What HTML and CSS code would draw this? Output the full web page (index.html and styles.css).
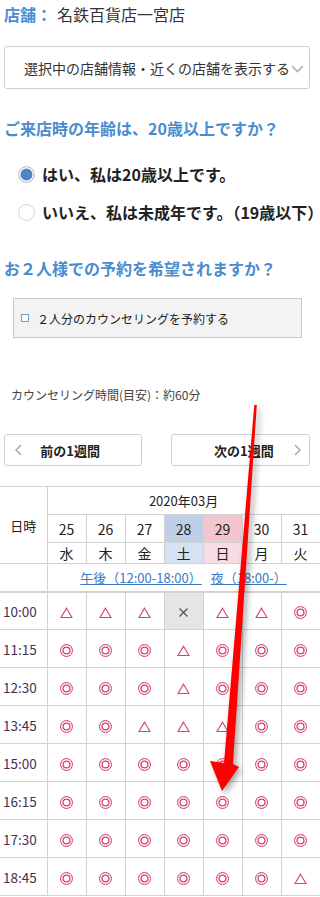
FILE: index.html
```html
<!DOCTYPE html>
<html lang="ja">
<head>
<meta charset="utf-8">
<title>予約</title>
<link rel="stylesheet" href="styles.css">
</head>
<body>
<div class="page">
  <p class="store"><span class="store-label">店舗：</span><span class="store-name">名鉄百貨店一宮店</span></p>
  <div class="select">
    <span>選択中の店舗情報・近くの店舗を表示する</span>
    <svg class="select-chev" width="13" height="8" viewBox="0 0 13 8"><polyline points="1,1 6.5,6.5 12,1" fill="none" stroke="#b0b0b0" stroke-width="1.6"/></svg>
  </div>

  <h2 class="question q1">ご来店時の年齢は、20歳以上ですか？</h2>
  <ul class="radios">
    <li class="radio-row"><span class="radio checked"></span><span class="radio-text">はい、私は20歳以上です。</span></li>
    <li class="radio-row"><span class="radio"></span><span class="radio-text">いいえ、私は未成年です。（19歳以下）</span></li>
  </ul>

  <h2 class="question q2">お２人様での予約を希望されますか？</h2>
  <label class="pair-box"><span class="check"></span><span class="pair-text">２人分のカウンセリングを予約する</span></label>

  <p class="duration">カウンセリング時間(目安)：約60分</p>

  <div class="week-nav">
    <div class="week-btn prev">
      <svg class="nav-chev" width="7" height="12" viewBox="0 0 7 12"><polyline points="6,1 1,6 6,11" fill="none" stroke="#aaa" stroke-width="1.5"/></svg>
      <span>前の1週間</span>
    </div>
    <div class="week-btn next">
      <span>次の1週間</span>
      <svg class="nav-chev" width="7" height="12" viewBox="0 0 7 12"><polyline points="1,1 6,6 1,11" fill="none" stroke="#aaa" stroke-width="1.5"/></svg>
    </div>
  </div>
</div>

<table class="cal">
  <colgroup><col class="c-time"><col><col><col><col><col><col><col></colgroup>
  <thead>
    <tr class="r-month"><th rowspan="3" class="hd-time">日時</th><th colspan="7" class="month">2020年03月</th></tr>
    <tr class="r-date"><th>25</th><th>26</th><th>27</th><th class="sat">28</th><th class="sun">29</th><th>30</th><th>31</th></tr>
    <tr class="r-day"><th>水</th><th>木</th><th>金</th><th class="sat-l">土</th><th class="sun-l">日</th><th>月</th><th>火</th></tr>
    <tr class="r-link"><th></th><th colspan="7"><a class="jump" href="#">午後（12:00-18:00）</a><a class="jump" href="#">夜（18:00-）</a></th></tr>
  </thead>
  <tbody id="slots"></tbody>
</table>

<svg class="arrow" width="320" height="897" viewBox="0 0 320 897">
  <polygon points="254.3,405 256.8,405 233,764 239,767 222,791 210,761 224,763" fill="#ff0000"/>
</svg>

<script>
  var data = [
    ["10:00","TTTXTTO"],
    ["11:15","OOOTOOO"],
    ["12:30","OOOTOOO"],
    ["13:45","OOTTTOO"],
    ["15:00","OOOOOOO"],
    ["16:15","OOOOOOO"],
    ["17:30","OOOOOOO"],
    ["18:45","OOOOOOT"]
  ];
  var tri = '<svg class="tri" width="13" height="11" viewBox="0 0 13 11"><path d="M6.5 1.2 L12 10.5 H1 Z" fill="none" stroke="#d7426c" stroke-width="1.1"/></svg>';
  var cross = '<svg class="cross" width="11" height="11" viewBox="0 0 11 11"><path d="M1.5 1.5 L9.5 9.5 M9.5 1.5 L1.5 9.5" stroke="#555" stroke-width="1.3"/></svg>';
  var html = "";
  data.forEach(function (row) {
    html += '<tr><th class="time">' + row[0] + '</th>';
    row[1].split("").forEach(function (c) {
      if (c === "O") html += '<td><span class="dbl"></span></td>';
      else if (c === "T") html += '<td>' + tri + '</td>';
      else html += '<td class="full">' + cross + '</td>';
    });
    html += '</tr>';
  });
  document.getElementById("slots").innerHTML = html;
</script>
</body>
</html>
```

FILE: styles.css
```css
* { box-sizing: border-box; }
html, body { margin: 0; padding: 0; background: #fff; }
body {
  font-family: "Noto Sans CJK JP", "Noto Sans", sans-serif;
  color: #333;
  width: 320px;
  overflow: hidden;
  position: relative;
}
.page { padding: 4px 10px 0 4px; }

.store { margin: 0; font-size: 16px; line-height: 20px; white-space: nowrap; }
.store-label { color: #4a8ccf; font-weight: bold; }
.store-name { margin-left: 5px; }

.select {
  margin-top: 22px;
  height: 43px;
  border: 1px solid #cfcfcf;
  border-radius: 3px;
  display: flex;
  align-items: center;
  padding-left: 19px;
  font-size: 14px;
  white-space: nowrap;
}
.select-chev { margin-left: 1px; margin-top: 2px; }

.question {
  margin: 0;
  color: #4a8ccf;
  font-size: 16px;
  font-weight: bold;
  line-height: 22px;
  white-space: nowrap;
}
.q1 { margin-top: 28px; }
.q2 { margin-top: 26px; }

.radios { list-style: none; margin: 16px 0 0; padding: 0 0 0 14px; }
.radio-row { height: 38px; display: flex; align-items: center; white-space: nowrap; }
.radio {
  width: 17px; height: 17px; border-radius: 50%;
  border: 1px solid #d4d4d4; background: #fff; flex: none;
}
.radio.checked { background: #4e84c4; box-shadow: inset 0 0 0 1.5px #fff; }
.radio-text { margin-left: 7px; font-size: 16px; font-weight: bold; color: #222; }

.pair-box {
  margin: 19px 0 0 9px;
  width: 289px; height: 40px;
  background: #f3f3f3;
  border: 1px solid #c8c8c8;
  display: flex; align-items: center;
  padding-left: 7px;
  font-size: 12px;
}
.check { width: 8px; height: 8px; border: 1px solid #6f9fd4; background: #fff; flex: none; }
.pair-text { margin-left: 8px; color: #222; }

.duration { margin: 48px 0 0 7px; font-size: 12px; line-height: 18px; color: #444; }

.week-nav { margin-top: 30px; display: flex; justify-content: space-between; }
.week-btn {
  height: 32px;
  border: 1px solid #cfcfcf;
  border-radius: 3px;
  display: flex; align-items: center; justify-content: space-between;
  font-size: 13px; font-weight: bold; color: #222;
}
.prev { width: 138px; padding: 0 41px 0 10px; }
.next { width: 139px; padding: 0 8px 0 42px; }

.cal {
  margin-top: 20px;
  width: 320px;
  table-layout: fixed;
  border-collapse: collapse;
  font-size: 13px;
}
.cal col { width: 39px; }
.cal col.c-time { width: 47px; }
.cal th, .cal td {
  border: 1px solid #d2d2d2;
  padding: 0;
  text-align: center;
  font-weight: normal;
  color: #222;
}
.cal tr > :first-child { border-left: none; }
.r-month { height: 28px; }
.r-date { height: 28px; }
.r-day { height: 20px; }
.r-link { height: 28px; }
.r-link th { border-bottom: 2px solid #d2d2d2; }
.hd-time { font-size: 13px; }
.month { font-size: 13px; }
.r-date th { font-size: 14px; }
.r-day th { font-size: 14px; }
.sat { background: #bdd0e7; }
.sun { background: #f1c6ce; }
.sat-l { background: #d5e2f1; }
.sun-l { background: #f6dce3; }
.jump { color: #3a79c4; text-decoration: underline; font-size: 13px; }
.jump + .jump { margin-left: 9px; }

#slots tr { height: 38px; }
.cal .time { color: #432f55; font-size: 13.5px; text-align: left; padding-left: 3px; }
.full { background: #e5e5e5; }
.dbl {
  display: inline-block; vertical-align: middle;
  width: 13px; height: 13px; border-radius: 50%;
  border: 1.3px solid #d7426c;
  box-shadow: inset 0 0 0 1.4px #fff, inset 0 0 0 2.7px #d7426c;
}
.tri, .cross { display: inline-block; vertical-align: middle; }

.arrow {
  position: absolute; left: 0; top: 0;
  pointer-events: none;
  filter: drop-shadow(3px 3px 3px rgba(0,0,0,0.35));
}
```
